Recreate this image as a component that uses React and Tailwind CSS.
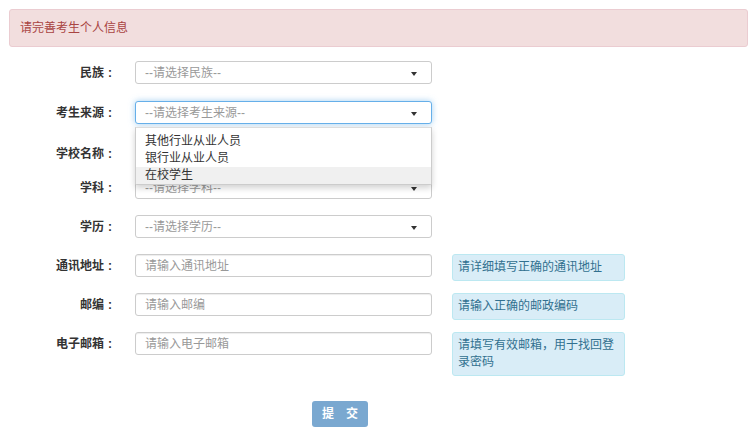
import React from 'react';

const font = { fontFamily: '"Liberation Sans", "Noto Sans CJK SC", sans-serif' };

function Caret() {
  return <span className="absolute right-[14px] top-[10px] w-0 h-0 border-l-[3.5px] border-r-[3.5px] border-t-[4px] border-l-transparent border-r-transparent border-t-[#333]" />;
}

function Row({ label, children, hint, className = '' }) {
  return (
    <div className={'flex items-start h-[23px] ' + className}>
      <div className="w-[116px] h-[23px] flex items-center justify-end text-[12px] font-bold text-[#333]">
        {label}
        <span className="w-[12px] text-center">:</span>
      </div>
      <div className="ml-[19px] w-[297px] relative">{children}</div>
      {hint && (
        <div className="ml-[20px] w-[173px] px-[5px] pt-[4px] pb-[4px] bg-[#d9edf7] border border-[#bce8f1] rounded-[3px] text-[12px] leading-[17px] text-[#31708f]">
          {hint}
        </div>
      )}
    </div>
  );
}

function Select({ text, focus }) {
  return (
    <div className={'relative h-[23px] rounded-[3px] border bg-white flex items-center pl-[9px] text-[12px] text-[#999] ' + (focus ? 'border-[#66afe9] shadow-[0_0_6px_rgba(102,175,233,0.6)]' : 'border-[#ccc]')}>
      {text}
      <Caret />
    </div>
  );
}

function Input({ text }) {
  return (
    <div className="h-[23px] rounded-[3px] border border-[#ccc] bg-white flex items-center pl-[9px] text-[12px] text-[#999] shadow-[inset_0_1px_1px_rgba(0,0,0,0.075)]">
      {text}
    </div>
  );
}

export default function App() {
  return (
    <div className="w-[755px] h-[439px] bg-white overflow-hidden" style={font}>
      <div className="pt-[9px] px-[9px]">
        <div className="h-[38px] w-[739px] bg-[#f2dede] border border-[#ebccd1] rounded-[3px] flex items-center pl-[10px] text-[12px] text-[#a94442]">
          请完善考生个人信息
        </div>
      </div>
      <div className="mt-[14px] flex flex-col">
        <Row label="民族"><Select text="--请选择民族--" /></Row>
        <Row label="考生来源" className="relative z-10 mt-[17px]">
          <Select text="--请选择考生来源--" focus />
          <div className="absolute left-0 top-[26px] w-[297px] bg-white border border-[#ccc] border-t-[#ddd] rounded-b-[2px] shadow-[0_3px_6px_rgba(0,0,0,0.18)] text-[12px] leading-[17px] text-[#333] pt-[5px]">
            <div className="pl-[9px]">其他行业从业人员</div>
            <div className="pl-[9px]">银行业从业人员</div>
            <div className="pl-[9px] bg-[#f0f0f0]">在校学生</div>
          </div>
        </Row>
        <Row label="学校名称" className="mt-[18px]"><Input text="" /></Row>
        <Row label="学科" className="mt-[11px]"><Select text="--请选择学科--" /></Row>
        <Row label="学历" className="mt-[16px]"><Select text="--请选择学历--" /></Row>
        <Row label="通讯地址" className="mt-[16px]" hint="请详细填写正确的通讯地址"><Input text="请输入通讯地址" /></Row>
        <Row label="邮编" className="mt-[16px]" hint="请输入正确的邮政编码"><Input text="请输入邮编" /></Row>
        <Row label="电子邮箱" className="mt-[16px]" hint="请填写有效邮箱，用于找回登录密码"><Input text="请输入电子邮箱" /></Row>
      </div>
      <div className="mt-[46px] pl-[312px]">
        <button className="w-[56px] h-[26px] rounded-[3px] bg-[#7aa8d0] text-white text-[12px] font-bold whitespace-nowrap">提　交</button>
      </div>
    </div>
  );
}
